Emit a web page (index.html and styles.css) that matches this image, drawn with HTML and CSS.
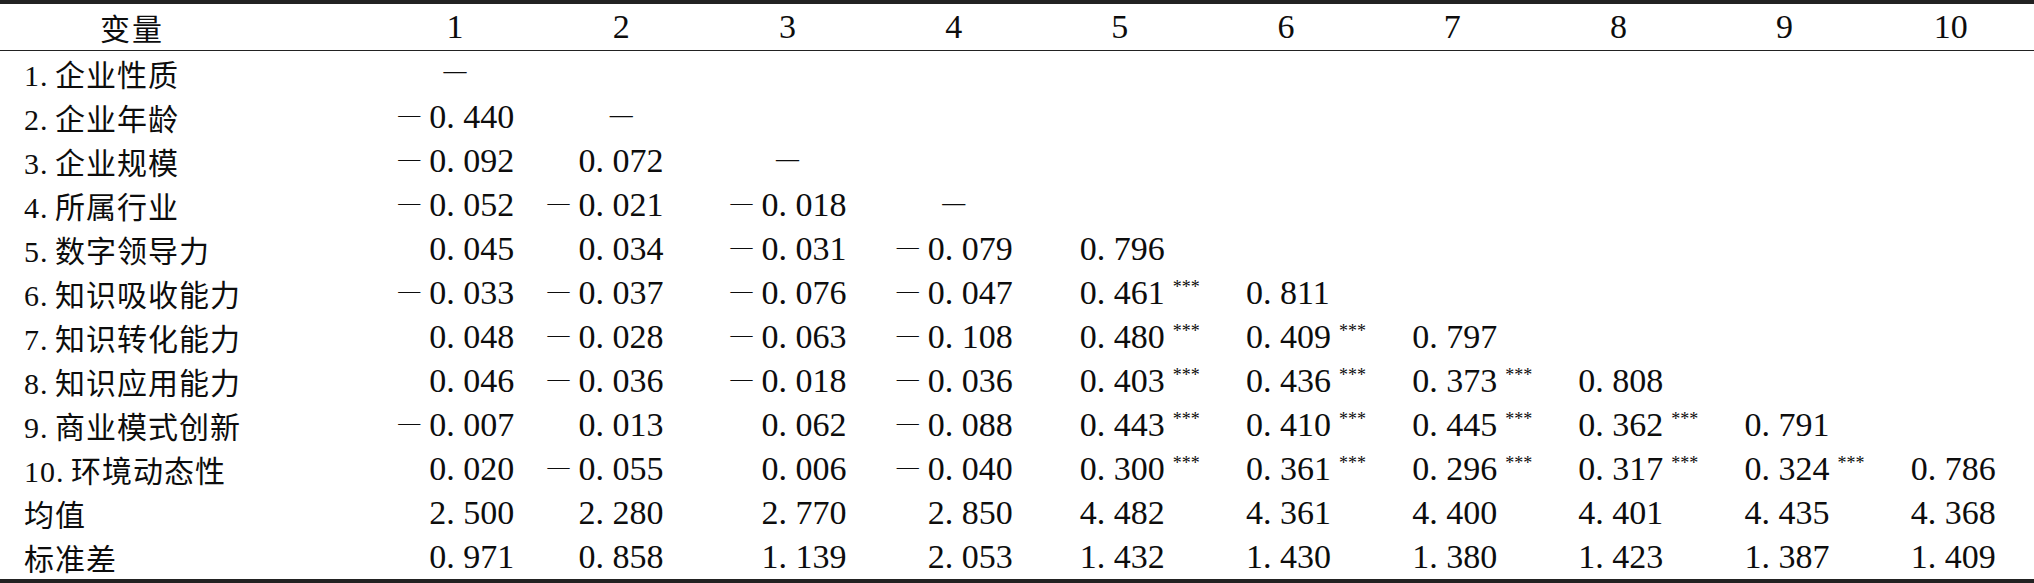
FILE: index.html
```html
<!DOCTYPE html>
<html lang="zh-CN">
<head>
<meta charset="utf-8">
<title>相关性分析</title>
<link rel="stylesheet" href="styles.css">
</head>
<body>
<table class="corr">
  <colgroup>
    <col class="c-label">
    <col span="10">
  </colgroup>
  <thead>
    <tr>
      <th class="h0">变量</th>
      <th>1</th><th>2</th><th>3</th><th>4</th><th>5</th><th>6</th><th>7</th><th>8</th><th>9</th><th>10</th>
    </tr>
  </thead>
  <tbody>
    <tr>
      <td class="l">1<span class="p">.</span>企业性质</td>
      <td class="d"><span class="dash">—</span></td><td></td><td></td><td></td><td></td><td></td><td></td><td></td><td></td><td></td>
    </tr>
    <tr>
      <td class="l">2<span class="p">.</span>企业年龄</td>
      <td><span class="m">—</span>0<span class="p">.</span>440</td>
      <td class="d"><span class="dash">—</span></td><td></td><td></td><td></td><td></td><td></td><td></td><td></td><td></td>
    </tr>
    <tr>
      <td class="l">3<span class="p">.</span>企业规模</td>
      <td><span class="m">—</span>0<span class="p">.</span>092</td>
      <td>0<span class="p">.</span>072</td>
      <td class="d"><span class="dash">—</span></td><td></td><td></td><td></td><td></td><td></td><td></td><td></td>
    </tr>
    <tr>
      <td class="l">4<span class="p">.</span>所属行业</td>
      <td><span class="m">—</span>0<span class="p">.</span>052</td>
      <td><span class="m">—</span>0<span class="p">.</span>021</td>
      <td><span class="m">—</span>0<span class="p">.</span>018</td>
      <td class="d"><span class="dash">—</span></td><td></td><td></td><td></td><td></td><td></td><td></td>
    </tr>
    <tr>
      <td class="l">5<span class="p">.</span>数字领导力</td>
      <td>0<span class="p">.</span>045</td>
      <td>0<span class="p">.</span>034</td>
      <td><span class="m">—</span>0<span class="p">.</span>031</td>
      <td><span class="m">—</span>0<span class="p">.</span>079</td>
      <td>0<span class="p">.</span>796</td><td></td><td></td><td></td><td></td><td></td>
    </tr>
    <tr>
      <td class="l">6<span class="p">.</span>知识吸收能力</td>
      <td><span class="m">—</span>0<span class="p">.</span>033</td>
      <td><span class="m">—</span>0<span class="p">.</span>037</td>
      <td><span class="m">—</span>0<span class="p">.</span>076</td>
      <td><span class="m">—</span>0<span class="p">.</span>047</td>
      <td>0<span class="p">.</span>461<sup class="s">***</sup></td>
      <td>0<span class="p">.</span>811</td><td></td><td></td><td></td><td></td>
    </tr>
    <tr>
      <td class="l">7<span class="p">.</span>知识转化能力</td>
      <td>0<span class="p">.</span>048</td>
      <td><span class="m">—</span>0<span class="p">.</span>028</td>
      <td><span class="m">—</span>0<span class="p">.</span>063</td>
      <td><span class="m">—</span>0<span class="p">.</span>108</td>
      <td>0<span class="p">.</span>480<sup class="s">***</sup></td>
      <td>0<span class="p">.</span>409<sup class="s">***</sup></td>
      <td>0<span class="p">.</span>797</td><td></td><td></td><td></td>
    </tr>
    <tr>
      <td class="l">8<span class="p">.</span>知识应用能力</td>
      <td>0<span class="p">.</span>046</td>
      <td><span class="m">—</span>0<span class="p">.</span>036</td>
      <td><span class="m">—</span>0<span class="p">.</span>018</td>
      <td><span class="m">—</span>0<span class="p">.</span>036</td>
      <td>0<span class="p">.</span>403<sup class="s">***</sup></td>
      <td>0<span class="p">.</span>436<sup class="s">***</sup></td>
      <td>0<span class="p">.</span>373<sup class="s">***</sup></td>
      <td>0<span class="p">.</span>808</td><td></td><td></td>
    </tr>
    <tr>
      <td class="l">9<span class="p">.</span>商业模式创新</td>
      <td><span class="m">—</span>0<span class="p">.</span>007</td>
      <td>0<span class="p">.</span>013</td>
      <td>0<span class="p">.</span>062</td>
      <td><span class="m">—</span>0<span class="p">.</span>088</td>
      <td>0<span class="p">.</span>443<sup class="s">***</sup></td>
      <td>0<span class="p">.</span>410<sup class="s">***</sup></td>
      <td>0<span class="p">.</span>445<sup class="s">***</sup></td>
      <td>0<span class="p">.</span>362<sup class="s">***</sup></td>
      <td>0<span class="p">.</span>791</td><td></td>
    </tr>
    <tr>
      <td class="l">10<span class="p">.</span>环境动态性</td>
      <td>0<span class="p">.</span>020</td>
      <td><span class="m">—</span>0<span class="p">.</span>055</td>
      <td>0<span class="p">.</span>006</td>
      <td><span class="m">—</span>0<span class="p">.</span>040</td>
      <td>0<span class="p">.</span>300<sup class="s">***</sup></td>
      <td>0<span class="p">.</span>361<sup class="s">***</sup></td>
      <td>0<span class="p">.</span>296<sup class="s">***</sup></td>
      <td>0<span class="p">.</span>317<sup class="s">***</sup></td>
      <td>0<span class="p">.</span>324<sup class="s">***</sup></td>
      <td>0<span class="p">.</span>786</td>
    </tr>
    <tr>
      <td class="l">均值</td>
      <td>2<span class="p">.</span>500</td>
      <td>2<span class="p">.</span>280</td>
      <td>2<span class="p">.</span>770</td>
      <td>2<span class="p">.</span>850</td>
      <td>4<span class="p">.</span>482</td>
      <td>4<span class="p">.</span>361</td>
      <td>4<span class="p">.</span>400</td>
      <td>4<span class="p">.</span>401</td>
      <td>4<span class="p">.</span>435</td>
      <td>4<span class="p">.</span>368</td>
    </tr>
    <tr>
      <td class="l">标准差</td>
      <td>0<span class="p">.</span>971</td>
      <td>0<span class="p">.</span>858</td>
      <td>1<span class="p">.</span>139</td>
      <td>2<span class="p">.</span>053</td>
      <td>1<span class="p">.</span>432</td>
      <td>1<span class="p">.</span>430</td>
      <td>1<span class="p">.</span>380</td>
      <td>1<span class="p">.</span>423</td>
      <td>1<span class="p">.</span>387</td>
      <td>1<span class="p">.</span>409</td>
    </tr>
  </tbody>
</table>
</body>
</html>
```
FILE: styles.css
```css
html, body {
  margin: 0;
  padding: 0;
  background: #ffffff;
}

body {
  color: #0d0d0d;
  font-family: "Liberation Serif", "Noto Sans CJK SC", serif;
}

.corr {
  width: 2034px;
  border-collapse: collapse;
  table-layout: fixed;
}

.c-label {
  width: 372px;
}

.corr thead tr {
  border-top: 4px solid #222222;
  border-bottom: 1px solid #222222;
}

.corr tbody tr:last-child {
  border-bottom: 4px solid #222222;
}

.corr th {
  height: 46px;
  padding: 0;
  font-weight: normal;
  font-size: 34px;
  text-align: center;
  vertical-align: middle;
}

.corr th.h0 {
  text-align: left;
  padding-left: 100px;
  font-size: 30px;
  letter-spacing: 2px;
}

.corr td {
  height: 44px;
  padding: 0;
  font-size: 34px;
  white-space: nowrap;
  vertical-align: middle;
}

.corr td:nth-child(2),
.corr td:nth-child(4),
.corr td:nth-child(5) {
  text-align: right;
  padding-right: 24px;
}

.corr td:nth-child(3) {
  text-align: right;
  padding-right: 41px;
}

.corr td:nth-child(n+6) {
  text-align: left;
  padding-left: 43px;
}

.corr td.l {
  text-align: left;
  padding-left: 24px;
  font-size: 30px;
  letter-spacing: 1px;
}

.corr td.d {
  text-align: center;
  padding: 0;
}

.p {
  display: inline-block;
  width: 0.5em;
  text-align: left;
}

.m {
  display: inline-block;
  width: 31px;
  text-align: left;
  font-size: 22px;
  vertical-align: 6px;
}

.dash {
  font-size: 23px;
  vertical-align: 6px;
}

.s {
  font-size: 18px;
  line-height: 0;
  vertical-align: 11px;
  margin-left: 8px;
}
```
